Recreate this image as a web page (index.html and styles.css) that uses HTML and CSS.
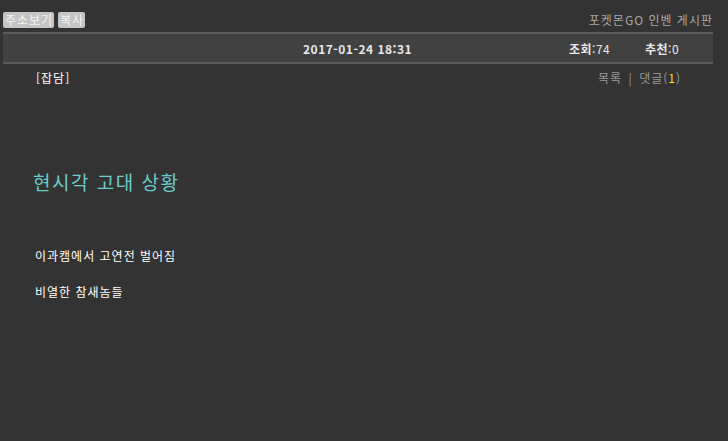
FILE: index.html
```html
<!DOCTYPE html>
<html lang="ko">
<head>
<meta charset="utf-8">
<title>현시각 고대 상황</title>
<link rel="stylesheet" href="styles.css">
</head>
<body>
<div class="page">
  <div class="top">
    <div class="tools">
      <span class="btn">주소보기</span><span class="btn">복사</span>
    </div>
    <div class="board">포켓몬GO 인벤 게시판</div>
  </div>
  <div class="infobar">
    <span class="date">2017-01-24 18:31</span>
    <span class="stat"><b>조회</b>:74</span>
    <span class="stat rec"><b>추천</b>:0</span>
  </div>
  <div class="sub">
    <span class="cat">[잡담]</span>
    <span class="links">목록 <span class="sep">|</span> 댓글(<span class="cnt">1</span>)</span>
  </div>
  <h1 class="title">현시각 고대 상황</h1>
  <div class="body">
    <p>이과캠에서 고연전 벌어짐</p>
    <p>비열한 참새놈들</p>
  </div>
</div>
</body>
</html>
```

FILE: styles.css
```css
html, body {
  margin: 0;
  padding: 0;
  background: #333333;
}
body {
  font-family: "Noto Sans CJK KR", "Noto Sans", sans-serif;
  font-size: 12px;
  letter-spacing: 1px;
  color: #ffffff;
}
.page {
  width: 710px;
  padding: 10px 0 0 3px;
}
.top {
  display: flex;
  justify-content: space-between;
  align-items: flex-end;
  height: 20px;
}
.tools {
  display: flex;
  gap: 4px;
  padding-bottom: 2px;
}
.btn {
  background: #c4c4c4;
  color: #f4f4f4;
  font-size: 12px;
  line-height: 16px;
  height: 16px;
  padding: 0 1px 0 2px;
  border-radius: 2px;
}
.board {
  color: #a8a8a8;
  font-size: 12px;
  line-height: 16px;
  padding-bottom: 2px;
}
.infobar {
  margin-top: 2px;
  height: 28px;
  background: #414141;
  border-top: 2px solid #5a5a5a;
  border-bottom: 2px solid #595959;
  display: flex;
  align-items: center;
  color: #e8e8e8;
  font-weight: bold;
  font-size: 12px;
  letter-spacing: 0.5px;
}
.date {
  margin-left: 300px;
  width: 266px;
}
.stat {
  font-weight: normal;
  width: 76px;
}
.stat b {
  font-weight: bold;
}
.rec {
  width: auto;
}
.sub {
  display: flex;
  justify-content: space-between;
  padding: 5px 32px 0 33px;
  line-height: 18px;
}
.cat {
  color: #ffffff;
}
.links {
  color: #9a9a9a;
}
.sep {
  padding: 0 2px;
}
.cnt {
  color: #f2e600;
}
.title {
  margin: 82px 0 0 30px;
  font-size: 19px;
  font-weight: normal;
  color: #6ccccc;
  line-height: 26px;
  letter-spacing: 1.5px;
}
.body {
  margin: 52px 0 0 32px;
}
.body p {
  margin: 0 0 18px 0;
  line-height: 18px;
}
```
